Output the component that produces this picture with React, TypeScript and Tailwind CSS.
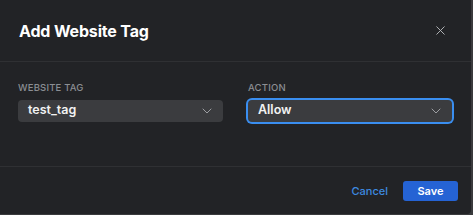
import { X, ChevronDown } from "lucide-react";

function SelectBox({ label, value, focused }: { label: string; value: string; focused?: boolean }) {
  return (
    <div className="flex flex-col">
      <label className="text-[9.5px] font-medium uppercase tracking-[0.02em] text-[#8b8e93] leading-none mb-[7px]">
        {label}
      </label>
      <div
        className={`flex items-center justify-between h-[22px] rounded-[4px] bg-[#3b3c3f] pl-[10px] pr-[8px] ${
          focused ? "ring-2 ring-[#3a8ef0]" : ""
        }`}
      >
        <span className="text-[12.5px] font-semibold text-[#f2f2f2]">{value}</span>
        <ChevronDown size={16} strokeWidth={1.4} className="text-[#a4a6aa]" />
      </div>
    </div>
  );
}

export default function App() {
  return (
    <div className="w-[473px] h-[215px] bg-[#3a3b3d] font-['Inter',sans-serif]">
      <div className="w-[471px] h-[214px] bg-[#222326] rounded-br-[4px] flex flex-col">
        <div className="h-[62px] flex items-center justify-between pl-[19px] pr-[23px] border-b border-[#2f3033]">
          <h1 className="text-[16px] font-bold text-white tracking-[-0.01em]">Add Website Tag</h1>
          <X size={15} strokeWidth={1.5} className="text-[#b8babd]" />
        </div>
        <div className="h-[105px] grid grid-cols-[205px_204px] gap-x-[25px] pl-[18px] pt-[21px] border-b border-[#2f3033]">
          <SelectBox label="Website Tag" value="test_tag" />
          <SelectBox label="Action" value="Allow" focused />
        </div>
        <div className="flex-1 flex items-center justify-end gap-[15px] pr-[13px] pt-[1px]">
          <button className="text-[11px] font-medium text-[#3d8ae0]">Cancel</button>
          <button className="w-[55px] h-[20px] rounded-[3px] bg-[#2563d4] text-[11px] font-semibold text-white">
            Save
          </button>
        </div>
      </div>
    </div>
  );
}
